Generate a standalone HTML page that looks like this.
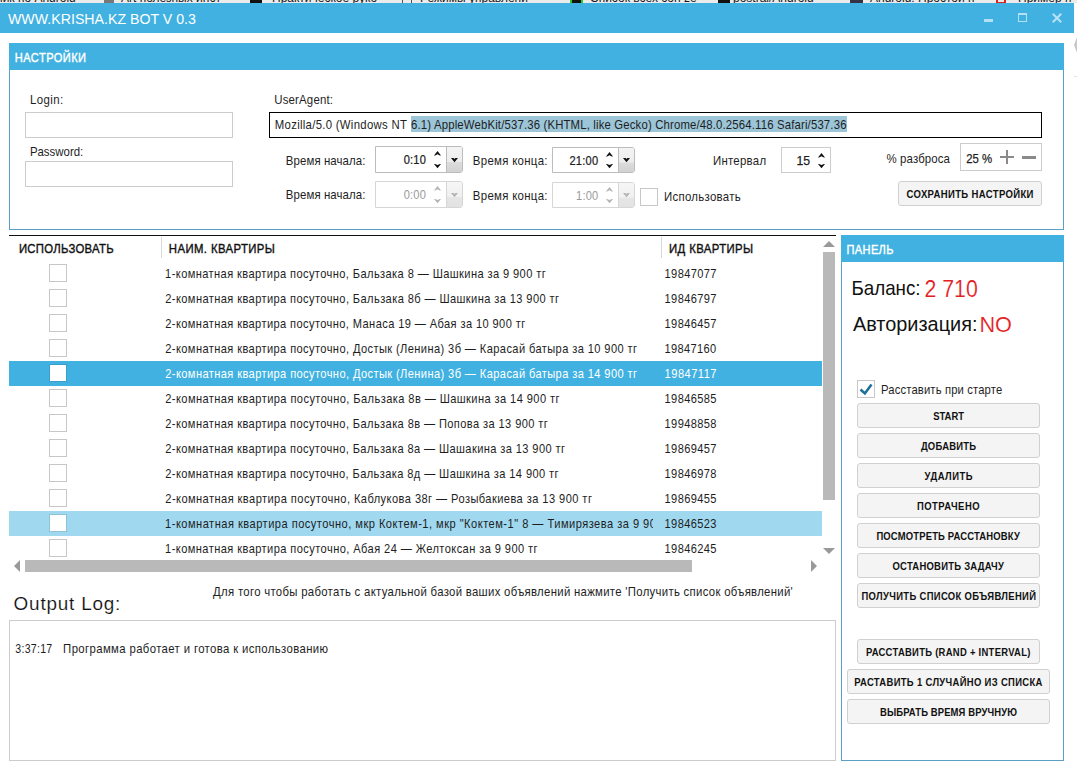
<!DOCTYPE html>
<html><head><meta charset="utf-8">
<style>
*{box-sizing:border-box;margin:0;padding:0}
html,body{width:1077px;height:765px;overflow:hidden;background:#fff}
body{position:relative;font-family:"Liberation Sans",sans-serif;color:#222}
.a{position:absolute}
.tb{position:absolute;border:1px solid #cccccc;background:#fff}
.btn{position:absolute;border:1px solid #d0d0d0;border-radius:3px;background:#f4f4f4}
.cb{position:absolute;width:18px;height:18px;border:1px solid rgba(0,0,0,0.22);background:#fff;background-clip:padding-box}
.hdr{position:absolute;background:#41b1e1}
.row{position:absolute;left:9px;width:813px;height:25px}
.row.sel{background:#41b1e1}
.row.hov{background:#a0d8f0}
.row .cb{left:40px;top:3px}
.row.sel .cb,.row.hov .cb{border-color:rgba(0,0,0,0.1)}
.ov{position:absolute;left:0;top:0;font-family:"Liberation Sans",sans-serif}
.ov text{white-space:pre}
</style></head><body>

<!-- top strip (bookmarks bar behind) -->
<div class="a" style="left:0;top:0;width:1077px;height:3px;background:#ebebeb;overflow:hidden;font-size:12px;line-height:12px;color:#1a1a1a;white-space:nowrap">
<span class="a" style="left:-4px;top:-8px">ник по Android</span>
<span class="a" style="left:104px;top:-4px;width:10px;height:8px;background:#777"></span>
<span class="a" style="left:121px;top:-8px">Art полезных инст</span>
<span class="a" style="left:250px;top:-4px;width:12px;height:8px;background:#111"></span>
<span class="a" style="left:272px;top:-8px">Практическое руко</span>
<span class="a" style="left:402px;top:-4px;width:10px;height:8px;border:1px solid #555"></span>
<span class="a" style="left:420px;top:-8px">Режимы управлени</span>
<span class="a" style="left:570px;top:-4px;width:13px;height:8px;background:#111;border-left:2px solid #2c2;border-right:2px solid #2c2"></span>
<span class="a" style="left:590px;top:-8px">Список всех con ze</span>
<span class="a" style="left:718px;top:-4px;width:12px;height:8px;background:#111"></span>
<span class="a" style="left:733px;top:-8px">postral/Android-</span>
<span class="a" style="left:850px;top:-4px;width:13px;height:8px;background:#334"></span>
<span class="a" style="left:870px;top:-8px">Android: Простой п</span>
<span class="a" style="left:996px;top:-4px;width:10px;height:8px;border:2px solid #d22"></span>
<span class="a" style="left:1018px;top:-8px">Пример п</span>
</div>
<!-- title bar -->
<div class="a" style="left:0;top:3px;width:1074px;height:30px;background:#41b1e1"></div>
<div class="a" style="left:984px;top:19px;width:9px;height:3px;background:#b3e0f3"></div>
<div class="a" style="left:1018px;top:13px;width:9px;height:9px;border:1px solid #b3e0f3;border-top-width:2px"></div>
<svg class="a" style="left:1052px;top:13px" width="10" height="10" viewBox="0 0 10 10"><path d="M0.8 0.8L9.2 9.2M9.2 0.8L0.8 9.2" stroke="#b8e3f5" stroke-width="2"/></svg>
<svg class="a" style="left:1073px;top:36px" width="4" height="18" viewBox="0 0 4 18"><path d="M1 9L4 1V17Z" fill="#c8c8c8"/></svg>
<div class="a" style="left:1074px;top:76px;width:3px;height:1px;background:#e4e4e4"></div>
<!-- Settings group -->
<div class="a" style="left:9px;top:43px;width:1055px;height:187px;border:1px solid #5c9fc6"></div>
<div class="hdr" style="left:9px;top:43px;width:1055px;height:27px"></div>
<div class="tb" style="left:25px;top:112px;width:208px;height:26px"></div>
<div class="tb" style="left:25px;top:161px;width:208px;height:26px"></div>
<div class="a" style="left:269px;top:112px;width:773px;height:26px;border:1px solid #000"></div>
<div class="a" style="left:411px;top:116px;width:436px;height:16px;background:#9cc5d8"></div>
<div class="a" style="left:375px;top:146px;width:88px;height:27px;border:1px solid #bcbcbc;border-radius:0 3px 3px 0;background:#fff;overflow:hidden">
<div class="a" style="left:70px;top:0;width:1px;height:25px;background:#bcbcbc"></div>
<div class="a" style="left:71px;top:0;width:15px;height:25px;background:linear-gradient(#f4f4f4,#ececec 60%,#dcdcdc 61%,#d2d2d2)"></div>
<svg class="a" style="left:58.0px;top:3.7px" width="7" height="5" viewBox="0 0 7 5"><path d="M0 4.4L3.5 0.1L7 4.4H5.9L3.5 3.3L1.1 4.4Z" fill="#111"/></svg>
<svg class="a" style="left:58.0px;top:16.8px" width="7" height="5" viewBox="0 0 7 5"><path d="M0 0L3.5 4.3L7 0H5.9L3.5 1.1L1.1 0Z" fill="#111"/></svg>
<svg class="a" style="left:75.0px;top:11px" width="7" height="5" viewBox="0 0 7 5"><path d="M0 0H2.6L3.5 1.1L4.4 0H7L3.5 4.2Z" fill="#111"/></svg>
</div>
<div class="a" style="left:552px;top:147px;width:83px;height:26px;border:1px solid #bcbcbc;border-radius:0 3px 3px 0;background:#fff;overflow:hidden">
<div class="a" style="left:65px;top:0;width:1px;height:24px;background:#bcbcbc"></div>
<div class="a" style="left:66px;top:0;width:15px;height:24px;background:linear-gradient(#f4f4f4,#ececec 60%,#dcdcdc 61%,#d2d2d2)"></div>
<svg class="a" style="left:53.1px;top:3.7px" width="7" height="5" viewBox="0 0 7 5"><path d="M0 4.4L3.5 0.1L7 4.4H5.9L3.5 3.3L1.1 4.4Z" fill="#111"/></svg>
<svg class="a" style="left:53.1px;top:15.7px" width="7" height="5" viewBox="0 0 7 5"><path d="M0 0L3.5 4.3L7 0H5.9L3.5 1.1L1.1 0Z" fill="#111"/></svg>
<svg class="a" style="left:70.0px;top:9.8px" width="7" height="5" viewBox="0 0 7 5"><path d="M0 0H2.6L3.5 1.1L4.4 0H7L3.5 4.2Z" fill="#111"/></svg>
</div>
<div class="a" style="left:375px;top:181px;width:88px;height:27px;border:1px solid #d6d6d6;border-radius:0 3px 3px 0;background:#fff;overflow:hidden">
<div class="a" style="left:70px;top:0;width:1px;height:25px;background:#d6d6d6"></div>
<div class="a" style="left:71px;top:0;width:15px;height:25px;background:linear-gradient(#f6f6f6,#f0f0f0 60%,#e6e6e6 61%,#e2e2e2)"></div>
<svg class="a" style="left:58.0px;top:3.7px" width="7" height="5" viewBox="0 0 7 5"><path d="M0 4.4L3.5 0.1L7 4.4H5.9L3.5 3.3L1.1 4.4Z" fill="#b4b4b4"/></svg>
<svg class="a" style="left:58.0px;top:16.8px" width="7" height="5" viewBox="0 0 7 5"><path d="M0 0L3.5 4.3L7 0H5.9L3.5 1.1L1.1 0Z" fill="#b4b4b4"/></svg>
<svg class="a" style="left:75.0px;top:11px" width="7" height="5" viewBox="0 0 7 5"><path d="M0 0H2.6L3.5 1.1L4.4 0H7L3.5 4.2Z" fill="#b4b4b4"/></svg>
</div>
<div class="a" style="left:552px;top:182px;width:83px;height:26px;border:1px solid #d6d6d6;border-radius:0 3px 3px 0;background:#fff;overflow:hidden">
<div class="a" style="left:65px;top:0;width:1px;height:24px;background:#d6d6d6"></div>
<div class="a" style="left:66px;top:0;width:15px;height:24px;background:linear-gradient(#f6f6f6,#f0f0f0 60%,#e6e6e6 61%,#e2e2e2)"></div>
<svg class="a" style="left:53.1px;top:3.7px" width="7" height="5" viewBox="0 0 7 5"><path d="M0 4.4L3.5 0.1L7 4.4H5.9L3.5 3.3L1.1 4.4Z" fill="#b4b4b4"/></svg>
<svg class="a" style="left:53.1px;top:15.7px" width="7" height="5" viewBox="0 0 7 5"><path d="M0 0L3.5 4.3L7 0H5.9L3.5 1.1L1.1 0Z" fill="#b4b4b4"/></svg>
<svg class="a" style="left:70.0px;top:9.8px" width="7" height="5" viewBox="0 0 7 5"><path d="M0 0H2.6L3.5 1.1L4.4 0H7L3.5 4.2Z" fill="#b4b4b4"/></svg>
</div>
<div class="cb" style="left:640px;top:188px"></div>
<div class="tb" style="left:781px;top:147px;width:50px;height:26px"></div>
<svg class="a" style="left:818px;top:152.5px" width="7" height="5" viewBox="0 0 7 5"><path d="M0 4.4L3.5 0.1L7 4.4H5.9L3.5 3.3L1.1 4.4Z" fill="#111"/></svg>
<svg class="a" style="left:818px;top:163.8px" width="7" height="5" viewBox="0 0 7 5"><path d="M0 0L3.5 4.3L7 0H5.9L3.5 1.1L1.1 0Z" fill="#111"/></svg>
<div class="tb" style="left:960px;top:143px;width:82px;height:28px"></div>
<div class="a" style="left:1000px;top:156px;width:14px;height:2px;background:#8a8a8a"></div>
<div class="a" style="left:1006px;top:150px;width:2px;height:14px;background:#8a8a8a"></div>
<div class="a" style="left:1022px;top:156px;width:14px;height:2.6px;background:#8a8a8a"></div>
<div class="btn" style="left:898px;top:181px;width:144px;height:25px"></div>
<!-- DataGrid -->
<div class="a" style="left:9px;top:235px;width:827px;height:1px;background:#111"></div>
<div class="a" style="left:161px;top:237px;width:1px;height:21px;background:#d8d8d8"></div>
<div class="a" style="left:661px;top:237px;width:1px;height:21px;background:#d8d8d8"></div>
<div class="row" style="top:261px"><i class="cb"></i></div>
<div class="row" style="top:286px"><i class="cb"></i></div>
<div class="row" style="top:311px"><i class="cb"></i></div>
<div class="row" style="top:336px"><i class="cb"></i></div>
<div class="row sel" style="top:361px"><i class="cb"></i></div>
<div class="row" style="top:386px"><i class="cb"></i></div>
<div class="row" style="top:411px"><i class="cb"></i></div>
<div class="row" style="top:436px"><i class="cb"></i></div>
<div class="row" style="top:461px"><i class="cb"></i></div>
<div class="row" style="top:486px"><i class="cb"></i></div>
<div class="row hov" style="top:511px"><i class="cb"></i></div>
<div class="row" style="top:536px"><i class="cb"></i></div>
<!-- vertical scrollbar -->
<svg class="a" style="left:823px;top:241px" width="12" height="6" viewBox="0 0 12 6"><path d="M0 6L6 0L12 6Z" fill="#999"/></svg>
<div class="a" style="left:823px;top:252px;width:12px;height:248px;background:#b9b9b9"></div>
<svg class="a" style="left:823px;top:548px" width="12" height="6" viewBox="0 0 12 6"><path d="M0 0L6 6L12 0Z" fill="#999"/></svg>
<!-- horizontal scrollbar -->
<svg class="a" style="left:14px;top:560px" width="6" height="12" viewBox="0 0 6 12"><path d="M6 0L0 6L6 12Z" fill="#999"/></svg>
<div class="a" style="left:25px;top:560px;width:667px;height:12px;background:#b9b9b9"></div>
<svg class="a" style="left:811px;top:560px" width="6" height="12" viewBox="0 0 6 12"><path d="M0 0L6 6L0 12Z" fill="#999"/></svg>
<!-- Right panel -->
<div class="a" style="left:841px;top:235px;width:223px;height:526px;border:1px solid #5c9fc6"></div>
<div class="hdr" style="left:841px;top:235px;width:223px;height:27px"></div>
<div class="cb" style="left:857px;top:380px"></div>
<svg class="a" style="left:857px;top:380px" width="18" height="18" viewBox="0 0 18 18"><path d="M3.5 9.5L7.9 13.4L14.5 4.5" stroke="#1f6f9c" stroke-width="2.6" fill="none"/></svg>
<div class="btn" style="left:857px;top:403px;width:183px;height:25px"></div>
<div class="btn" style="left:857px;top:433px;width:183px;height:25px"></div>
<div class="btn" style="left:857px;top:463px;width:183px;height:25px"></div>
<div class="btn" style="left:857px;top:493px;width:183px;height:25px"></div>
<div class="btn" style="left:857px;top:523px;width:183px;height:25px"></div>
<div class="btn" style="left:857px;top:553px;width:183px;height:25px"></div>
<div class="btn" style="left:857px;top:583px;width:183px;height:25px"></div>
<div class="btn" style="left:857px;top:639px;width:183px;height:25px"></div>
<div class="btn" style="left:847px;top:669px;width:203px;height:25px"></div>
<div class="btn" style="left:847px;top:699px;width:203px;height:25px"></div>
<!-- Output log -->
<div class="tb" style="left:9px;top:620px;width:827px;height:141px"></div>
<svg class="ov" width="1077" height="765" viewBox="0 0 1077 765"><defs><clipPath id="c44"><rect x="161" y="513" width="492" height="25"/></clipPath></defs>
<text x="8.00" y="23.80" font-size="15" textLength="187.87" lengthAdjust="spacingAndGlyphs" fill="#ffffff">WWW.KRISHA.KZ BOT V 0.3</text>
<text transform="matrix(0.8800 0 0 1 14.83 61.80)" x="0" y="0" font-size="12.6" textLength="80.95" lengthAdjust="spacing" fill="#ffffff" stroke="#ffffff" stroke-width="0.4">НАСТРОЙКИ</text>
<text transform="matrix(0.8800 0 0 1 29.91 104.00)" x="0" y="0" font-size="13" textLength="37.87" lengthAdjust="spacing" fill="#1e1e1e">Login:</text>
<text x="29.91" y="156.00" font-size="13" textLength="53.32" lengthAdjust="spacingAndGlyphs" fill="#1e1e1e">Password:</text>
<text transform="matrix(0.8800 0 0 1 274.19 104.00)" x="0" y="0" font-size="13" textLength="66.87" lengthAdjust="spacing" fill="#1e1e1e">UserAgent:</text>
<text transform="matrix(0.8800 0 0 1 274.81 128.90)" x="0" y="0" font-size="12.9" textLength="150.09" lengthAdjust="spacing" fill="#1e1e1e">Mozilla/5.0 (Windows NT</text>
<text transform="matrix(0.8800 0 0 1 411.07 128.90)" x="0" y="0" font-size="12.9" textLength="494.76" lengthAdjust="spacing" fill="#1e1e1e">6.1) AppleWebKit/537.36 (KHTML, like Gecko) Chrome/48.0.2564.116 Safari/537.36</text>
<text transform="matrix(0.8800 0 0 1 285.81 165.00)" x="0" y="0" font-size="13" textLength="90.49" lengthAdjust="spacing" fill="#1e1e1e">Время начала:</text>
<text transform="matrix(0.8800 0 0 1 285.81 199.40)" x="0" y="0" font-size="13" textLength="90.49" lengthAdjust="spacing" fill="#1e1e1e">Время начала:</text>
<text transform="matrix(0.8800 0 0 1 472.81 165.00)" x="0" y="0" font-size="13" textLength="84.92" lengthAdjust="spacing" fill="#1e1e1e">Время конца:</text>
<text transform="matrix(0.8800 0 0 1 472.81 199.60)" x="0" y="0" font-size="13" textLength="84.92" lengthAdjust="spacing" fill="#1e1e1e">Время конца:</text>
<text transform="matrix(0.8800 0 0 1 664.01 200.50)" x="0" y="0" font-size="13" textLength="87.06" lengthAdjust="spacing" fill="#1e1e1e">Использовать</text>
<text transform="matrix(0.8800 0 0 1 712.91 164.80)" x="0" y="0" font-size="13" textLength="60.42" lengthAdjust="spacing" fill="#1e1e1e">Интервал</text>
<text transform="matrix(0.8800 0 0 1 886.54 162.80)" x="0" y="0" font-size="13" textLength="72.03" lengthAdjust="spacing" fill="#1e1e1e">% разброса</text>
<text x="966.17" y="162.80" font-size="13" textLength="25.97" lengthAdjust="spacingAndGlyphs" fill="#1e1e1e" stroke="#1e1e1e" stroke-width="0.25">25 %</text>
<text transform="matrix(0.8800 0 0 1 403.65 163.80)" x="0" y="0" font-size="12.6" textLength="25.37" lengthAdjust="spacing" fill="#1e1e1e" stroke="#1e1e1e" stroke-width="0.25">0:10</text>
<text transform="matrix(0.8800 0 0 1 403.65 198.80)" x="0" y="0" font-size="12.6" textLength="25.37" lengthAdjust="spacing" fill="#9a9a9a">0:00</text>
<text transform="matrix(0.8800 0 0 1 569.38 165.00)" x="0" y="0" font-size="12.6" textLength="32.72" lengthAdjust="spacing" fill="#1e1e1e" stroke="#1e1e1e" stroke-width="0.25">21:00</text>
<text transform="matrix(0.8800 0 0 1 576.11 199.80)" x="0" y="0" font-size="12.6" textLength="25.08" lengthAdjust="spacing" fill="#9a9a9a">1:00</text>
<text x="796.53" y="165.00" font-size="12.6" textLength="13.67" lengthAdjust="spacingAndGlyphs" fill="#1e1e1e" stroke="#1e1e1e" stroke-width="0.25">15</text>
<text transform="matrix(0.9000 0 0 1 906.50 198.10)" x="0" y="0" font-size="10.6" textLength="141.10" lengthAdjust="spacing" fill="#111111" font-weight="bold">СОХРАНИТЬ НАСТРОЙКИ</text>
<text transform="matrix(0.8800 0 0 1 18.91 253.00)" x="0" y="0" font-size="12.9" textLength="107.64" lengthAdjust="spacing" fill="#111111" stroke="#111111" stroke-width="0.4">ИСПОЛЬЗОВАТЬ</text>
<text transform="matrix(0.8800 0 0 1 168.81 253.00)" x="0" y="0" font-size="12.9" textLength="120.47" lengthAdjust="spacing" fill="#111111" stroke="#111111" stroke-width="0.4">НАИМ. КВАРТИРЫ</text>
<text transform="matrix(0.8800 0 0 1 668.91 253.00)" x="0" y="0" font-size="12.9" textLength="95.70" lengthAdjust="spacing" fill="#111111" stroke="#111111" stroke-width="0.4">ИД КВАРТИРЫ</text>
<text transform="matrix(0.8800 0 0 1 165.11 278.00)" x="0" y="0" font-size="12.6" textLength="432.53" lengthAdjust="spacing" fill="#1e1e1e">1-комнатная квартира посуточно, Бальзака 8 — Шашкина за 9 900 тг</text>
<text transform="matrix(0.8800 0 0 1 664.61 278.00)" x="0" y="0" font-size="12.6" textLength="58.91" lengthAdjust="spacing" fill="#1e1e1e">19847077</text>
<text transform="matrix(0.8800 0 0 1 165.28 303.00)" x="0" y="0" font-size="12.6" textLength="447.45" lengthAdjust="spacing" fill="#1e1e1e">2-комнатная квартира посуточно, Бальзака 8б — Шашкина за 13 900 тг</text>
<text transform="matrix(0.8800 0 0 1 664.61 303.00)" x="0" y="0" font-size="12.6" textLength="58.91" lengthAdjust="spacing" fill="#1e1e1e">19846797</text>
<text transform="matrix(0.8800 0 0 1 165.28 328.00)" x="0" y="0" font-size="12.6" textLength="409.04" lengthAdjust="spacing" fill="#1e1e1e">2-комнатная квартира посуточно, Манаса 19 — Абая за 10 900 тг</text>
<text transform="matrix(0.8800 0 0 1 664.61 328.00)" x="0" y="0" font-size="12.6" textLength="58.91" lengthAdjust="spacing" fill="#1e1e1e">19846457</text>
<text transform="matrix(0.8800 0 0 1 165.28 353.00)" x="0" y="0" font-size="12.6" textLength="536.08" lengthAdjust="spacing" fill="#1e1e1e">2-комнатная квартира посуточно, Достык (Ленина) 3б — Карасай батыра за 10 900 тг</text>
<text transform="matrix(0.8800 0 0 1 664.61 353.00)" x="0" y="0" font-size="12.6" textLength="58.71" lengthAdjust="spacing" fill="#1e1e1e">19847160</text>
<text transform="matrix(0.8800 0 0 1 165.28 378.00)" x="0" y="0" font-size="12.6" textLength="536.08" lengthAdjust="spacing" fill="#ffffff">2-комнатная квартира посуточно, Достык (Ленина) 3б — Карасай батыра за 14 900 тг</text>
<text transform="matrix(0.8800 0 0 1 664.61 378.00)" x="0" y="0" font-size="12.6" textLength="58.91" lengthAdjust="spacing" fill="#ffffff">19847117</text>
<text transform="matrix(0.8800 0 0 1 165.28 403.00)" x="0" y="0" font-size="12.6" textLength="448.01" lengthAdjust="spacing" fill="#1e1e1e">2-комнатная квартира посуточно, Бальзака 8в — Шашкина за 14 900 тг</text>
<text transform="matrix(0.8800 0 0 1 664.61 403.00)" x="0" y="0" font-size="12.6" textLength="58.91" lengthAdjust="spacing" fill="#1e1e1e">19846585</text>
<text transform="matrix(0.8800 0 0 1 165.28 428.00)" x="0" y="0" font-size="12.6" textLength="434.72" lengthAdjust="spacing" fill="#1e1e1e">2-комнатная квартира посуточно, Бальзака 8в — Попова за 13 900 тг</text>
<text transform="matrix(0.8800 0 0 1 664.61 428.00)" x="0" y="0" font-size="12.6" textLength="58.91" lengthAdjust="spacing" fill="#1e1e1e">19948858</text>
<text transform="matrix(0.8800 0 0 1 165.28 453.00)" x="0" y="0" font-size="12.6" textLength="454.26" lengthAdjust="spacing" fill="#1e1e1e">2-комнатная квартира посуточно, Бальзака 8а — Шашакина за 13 900 тг</text>
<text transform="matrix(0.8800 0 0 1 664.61 453.00)" x="0" y="0" font-size="12.6" textLength="58.91" lengthAdjust="spacing" fill="#1e1e1e">19869457</text>
<text transform="matrix(0.8800 0 0 1 165.28 478.00)" x="0" y="0" font-size="12.6" textLength="446.88" lengthAdjust="spacing" fill="#1e1e1e">2-комнатная квартира посуточно, Бальзака 8д — Шашкина за 14 900 тг</text>
<text transform="matrix(0.8800 0 0 1 664.61 478.00)" x="0" y="0" font-size="12.6" textLength="58.91" lengthAdjust="spacing" fill="#1e1e1e">19846978</text>
<text transform="matrix(0.8800 0 0 1 165.28 503.00)" x="0" y="0" font-size="12.6" textLength="484.83" lengthAdjust="spacing" fill="#1e1e1e">2-комнатная квартира посуточно, Каблукова 38г — Розыбакиева за 13 900 тг</text>
<text transform="matrix(0.8800 0 0 1 664.61 503.00)" x="0" y="0" font-size="12.6" textLength="58.91" lengthAdjust="spacing" fill="#1e1e1e">19869455</text>
<g clip-path="url(#c44)"><text transform="matrix(0.8800 0 0 1 165.11 528.00)" x="0" y="0" font-size="12.6" textLength="580.82" lengthAdjust="spacing" fill="#1e1e1e">1-комнатная квартира посуточно, мкр Коктем-1, мкр &quot;Коктем-1&quot; 8 — Тимирязева за 9 900 тг</text></g>
<text transform="matrix(0.8800 0 0 1 664.61 528.00)" x="0" y="0" font-size="12.6" textLength="58.91" lengthAdjust="spacing" fill="#1e1e1e">19846523</text>
<text transform="matrix(0.8800 0 0 1 165.11 553.00)" x="0" y="0" font-size="12.6" textLength="423.32" lengthAdjust="spacing" fill="#1e1e1e">1-комнатная квартира посуточно, Абая 24 — Желтоксан за 9 900 тг</text>
<text transform="matrix(0.8800 0 0 1 664.61 553.00)" x="0" y="0" font-size="12.6" textLength="58.91" lengthAdjust="spacing" fill="#1e1e1e">19846245</text>
<text transform="matrix(0.8800 0 0 1 846.53 254.30)" x="0" y="0" font-size="12.6" textLength="53.39" lengthAdjust="spacing" fill="#ffffff" stroke="#ffffff" stroke-width="0.4">ПАНЕЛЬ</text>
<text x="851.43" y="295.00" font-size="20.2" textLength="69.16" lengthAdjust="spacingAndGlyphs" fill="#111111">Баланс:</text>
<text x="924.50" y="296.80" font-size="23" textLength="53.33" lengthAdjust="spacingAndGlyphs" fill="#e3201f" stroke="#ffffff" stroke-width="0.15">2 710</text>
<text x="852.90" y="331.30" font-size="20.1" textLength="124.60" lengthAdjust="spacingAndGlyphs" fill="#111111">Авторизация:</text>
<text x="979.41" y="331.60" font-size="21.3" textLength="32.54" lengthAdjust="spacingAndGlyphs" fill="#e3201f" stroke="#ffffff" stroke-width="0.15">NO</text>
<text transform="matrix(0.8800 0 0 1 881.02 393.80)" x="0" y="0" font-size="12.8" textLength="137.66" lengthAdjust="spacing" fill="#1e1e1e">Расставить при старте</text>
<text x="933.25" y="420.10" font-size="10.5" textLength="30.76" lengthAdjust="spacingAndGlyphs" fill="#111111" font-weight="bold">START</text>
<text transform="matrix(0.9000 0 0 1 920.90 450.10)" x="0" y="0" font-size="10.5" textLength="61.33" lengthAdjust="spacing" fill="#111111" font-weight="bold">ДОБАВИТЬ</text>
<text transform="matrix(0.9000 0 0 1 924.60 480.10)" x="0" y="0" font-size="10.5" textLength="53.22" lengthAdjust="spacing" fill="#111111" font-weight="bold">УДАЛИТЬ</text>
<text transform="matrix(0.9000 0 0 1 916.91 510.10)" x="0" y="0" font-size="10.5" textLength="69.62" lengthAdjust="spacing" fill="#111111" font-weight="bold">ПОТРАЧЕНО</text>
<text transform="matrix(0.9000 0 0 1 876.41 540.10)" x="0" y="0" font-size="10.5" textLength="159.35" lengthAdjust="spacing" fill="#111111" font-weight="bold">ПОСМОТРЕТЬ РАССТАНОВКУ</text>
<text transform="matrix(0.9000 0 0 1 892.50 570.10)" x="0" y="0" font-size="10.5" textLength="123.69" lengthAdjust="spacing" fill="#111111" font-weight="bold">ОСТАНОВИТЬ ЗАДАЧУ</text>
<text transform="matrix(0.9000 0 0 1 861.41 600.10)" x="0" y="0" font-size="10.5" textLength="193.98" lengthAdjust="spacing" fill="#111111" font-weight="bold">ПОЛУЧИТЬ СПИСОК ОБЪЯВЛЕНИЙ</text>
<text transform="matrix(0.9000 0 0 1 865.91 656.10)" x="0" y="0" font-size="10.5" textLength="182.70" lengthAdjust="spacing" fill="#111111" font-weight="bold">РАССТАВИТЬ (RAND + INTERVAL)</text>
<text transform="matrix(0.9000 0 0 1 854.21 686.10)" x="0" y="0" font-size="10.5" textLength="209.08" lengthAdjust="spacing" fill="#111111" font-weight="bold">РАСТАВИТЬ 1 СЛУЧАЙНО ИЗ СПИСКА</text>
<text transform="matrix(0.9000 0 0 1 880.01 716.10)" x="0" y="0" font-size="10.5" textLength="152.10" lengthAdjust="spacing" fill="#111111" font-weight="bold">ВЫБРАТЬ ВРЕМЯ ВРУЧНУЮ</text>
<text transform="matrix(1.0000 0 0 1 13.61 609.50)" x="0" y="0" font-size="18.9" textLength="106.69" lengthAdjust="spacing" fill="#111111" stroke="#ffffff" stroke-width="0.15">Output Log:</text>
<text transform="matrix(0.8800 0 0 1 213.10 595.80)" x="0" y="0" font-size="12.9" textLength="658.72" lengthAdjust="spacing" fill="#1e1e1e">Для того чтобы работать с актуальной базой ваших объявлений нажмите 'Получить список объявлений'</text>
<text transform="matrix(0.8800 0 0 1 15.27 652.60)" x="0" y="0" font-size="12" textLength="42.00" lengthAdjust="spacing" fill="#1e1e1e">3:37:17</text>
<text transform="matrix(0.8800 0 0 1 63.11 652.60)" x="0" y="0" font-size="12.9" textLength="301.07" lengthAdjust="spacing" fill="#1e1e1e">Программа работает и готова к использованию</text>
</svg>
</body></html>
